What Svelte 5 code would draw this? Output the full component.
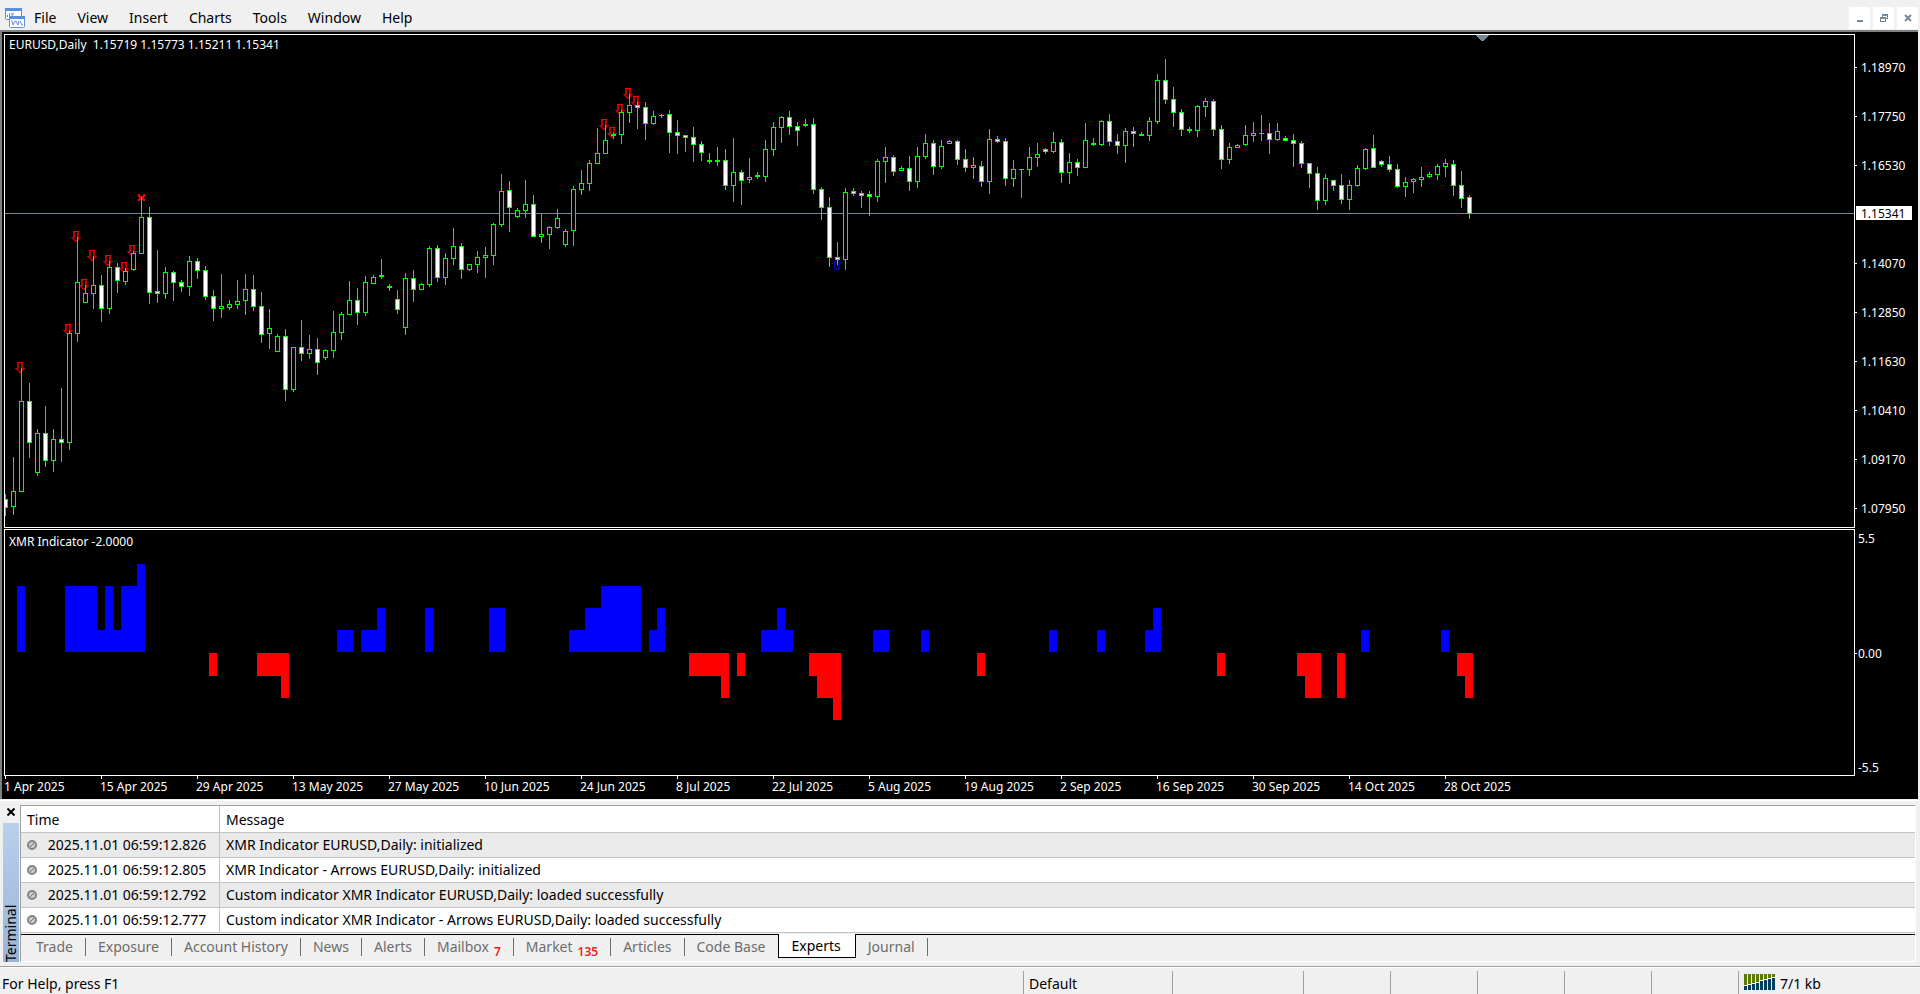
<script>
	const menu = ['File', 'View', 'Insert', 'Charts', 'Tools', 'Window', 'Help'];

	const STEP = 8;

	// high, open/close top, open/close bottom, low, 1 = bearish
	const candles = [
		[494, 499, 508, 516, 1], [457, 491, 507, 515, 0], [368, 401, 492, 492, 0], [383, 401, 443, 458, 1],
		[429, 433, 473, 476, 0], [406, 433, 461, 467, 1], [429, 439, 461, 472, 0], [388, 439, 443, 462, 1],
		[330, 333, 443, 450, 0], [237, 282, 334, 342, 0], [285, 293, 303, 303, 0], [256, 285, 294, 309, 0],
		[275, 285, 309, 322, 1], [261, 267, 309, 314, 0], [263, 267, 281, 293, 1], [268, 271, 282, 285, 0],
		[251, 253, 270, 271, 0], [197, 217, 254, 254, 0], [207, 217, 293, 304, 1], [250, 291, 294, 303, 1],
		[267, 272, 294, 299, 0], [271, 272, 283, 301, 1], [280, 282, 287, 292, 1], [256, 261, 287, 296, 0],
		[258, 261, 271, 279, 1], [266, 270, 297, 300, 1], [290, 296, 309, 321, 1], [274, 306, 309, 318, 0],
		[300, 304, 308, 310, 0], [280, 301, 305, 309, 0], [274, 289, 301, 315, 0], [275, 289, 307, 311, 1],
		[292, 306, 335, 343, 1], [309, 328, 334, 349, 0], [334, 336, 352, 352, 0], [329, 336, 390, 401, 1],
		[347, 347, 390, 392, 0], [320, 347, 354, 361, 1], [335, 349, 354, 359, 0], [338, 349, 363, 375, 1],
		[349, 350, 358, 360, 0], [311, 332, 351, 358, 0], [312, 314, 333, 340, 0], [281, 300, 315, 315, 0],
		[288, 300, 313, 325, 1], [276, 282, 313, 316, 0], [275, 277, 284, 284, 0], [259, 275, 277, 279, 0],
		[284, 286, 288, 291, 0], [290, 299, 310, 314, 1], [273, 278, 328, 335, 0], [270, 278, 290, 302, 1],
		[283, 284, 290, 290, 0], [246, 248, 285, 287, 0], [245, 248, 278, 282, 1], [253, 258, 278, 285, 0],
		[228, 246, 259, 265, 0], [243, 246, 270, 279, 1], [264, 264, 270, 271, 0], [251, 257, 265, 273, 0],
		[247, 255, 258, 278, 0], [223, 224, 256, 265, 0], [174, 191, 225, 227, 0], [181, 190, 208, 232, 1],
		[208, 210, 217, 218, 0], [180, 204, 211, 218, 0], [195, 204, 237, 237, 1], [214, 234, 237, 243, 0],
		[226, 227, 235, 249, 0], [209, 218, 228, 229, 0], [229, 231, 245, 247, 0], [186, 189, 231, 246, 0],
		[170, 183, 190, 195, 0], [160, 163, 184, 191, 0], [128, 153, 164, 164, 0], [125, 140, 154, 154, 0],
		[133, 134, 136, 139, 0], [110, 112, 135, 144, 0], [94, 105, 113, 123, 0], [102, 105, 108, 129, 1],
		[102, 107, 124, 140, 1], [111, 116, 124, 125, 0], [114, 115, 116, 118, 0], [110, 114, 133, 153, 1],
		[120, 132, 136, 154, 1], [135, 135, 138, 152, 1], [127, 137, 145, 162, 1], [141, 144, 153, 161, 1],
		[153, 160, 162, 164, 0], [147, 160, 162, 166, 0], [149, 160, 186, 190, 1], [138, 172, 186, 202, 0],
		[170, 172, 181, 205, 1], [158, 177, 180, 183, 0], [172, 175, 177, 179, 0], [140, 149, 177, 182, 0],
		[122, 127, 150, 156, 0], [116, 117, 128, 143, 0], [111, 117, 127, 135, 1], [122, 126, 131, 146, 1],
		[119, 124, 126, 127, 0], [118, 124, 190, 194, 1], [187, 189, 208, 220, 1], [197, 207, 258, 267, 1],
		[242, 257, 260, 265, 1], [188, 192, 260, 270, 0], [188, 191, 194, 196, 1], [191, 193, 196, 208, 1],
		[191, 194, 197, 216, 1], [159, 161, 197, 202, 0], [147, 157, 162, 183, 0], [155, 157, 172, 176, 1],
		[166, 168, 171, 171, 0], [156, 168, 182, 191, 1], [147, 156, 182, 188, 0], [134, 143, 157, 159, 0],
		[140, 143, 167, 175, 1], [140, 146, 167, 169, 0], [140, 141, 144, 144, 0], [140, 141, 160, 165, 1],
		[149, 159, 168, 172, 1], [157, 165, 168, 179, 0], [161, 166, 182, 187, 1], [129, 139, 182, 194, 0],
		[136, 139, 142, 143, 1], [138, 141, 179, 186, 1], [160, 169, 179, 187, 0], [169, 169, 170, 198, 0],
		[147, 157, 170, 176, 0], [143, 154, 158, 167, 0], [148, 149, 152, 154, 1], [132, 142, 152, 153, 0],
		[139, 142, 173, 183, 1], [153, 162, 173, 184, 0], [159, 162, 168, 176, 1], [123, 140, 168, 168, 0],
		[138, 143, 145, 146, 0], [120, 121, 145, 146, 0], [114, 121, 142, 146, 1], [134, 141, 146, 154, 1],
		[128, 131, 146, 163, 0], [127, 131, 134, 147, 1], [132, 134, 136, 136, 0], [117, 121, 136, 141, 0],
		[74, 80, 122, 124, 0], [59, 80, 100, 104, 1], [87, 99, 113, 127, 1], [109, 112, 130, 136, 1],
		[127, 129, 131, 133, 0], [105, 106, 131, 137, 0], [98, 101, 107, 117, 0], [99, 101, 130, 136, 1],
		[125, 129, 160, 169, 1], [143, 147, 160, 164, 0], [144, 145, 148, 148, 0], [125, 135, 145, 146, 0],
		[122, 133, 136, 142, 0], [115, 133, 134, 141, 0], [123, 133, 140, 154, 1], [123, 131, 140, 141, 0],
		[136, 138, 141, 141, 1], [134, 140, 144, 167, 1], [141, 143, 164, 168, 1], [163, 163, 174, 188, 1],
		[167, 173, 201, 210, 1], [174, 178, 201, 205, 0], [180, 180, 186, 191, 1], [174, 185, 200, 204, 1],
		[180, 185, 200, 210, 0], [165, 168, 186, 187, 0], [148, 149, 169, 170, 0], [135, 148, 168, 168, 1],
		[160, 161, 165, 167, 1], [156, 164, 170, 172, 1], [164, 169, 187, 188, 1], [177, 182, 187, 197, 0],
		[178, 179, 182, 193, 0], [167, 177, 180, 187, 0], [172, 174, 177, 178, 0], [164, 166, 175, 180, 0],
		[159, 163, 167, 177, 0], [160, 164, 186, 196, 1], [171, 185, 199, 208, 1], [195, 197, 214, 219, 1]
	];

	// bar index, top of the arrow
	const sellArrows = [
		[2, 362], [8, 324], [9, 231], [10, 279], [11, 250], [13, 255], [15, 262], [16, 245],
		[75, 119], [76, 127], [77, 104], [78, 88], [79, 96]
	];
	const buyArrows = [[104, 259]];

	// first bar, last bar, value
	const histogram = [
		[2, 2, 3], [8, 11, 3], [12, 12, 1], [13, 13, 3], [14, 14, 1], [15, 16, 3], [17, 17, 4],
		[26, 26, -1], [32, 34, -1], [35, 35, -2], [42, 43, 1], [45, 46, 1], [47, 47, 2],
		[53, 53, 2], [61, 62, 2], [71, 72, 1], [73, 74, 2], [75, 79, 3], [81, 81, 1],
		[82, 82, 2], [86, 89, -1], [90, 90, -2], [92, 92, -1], [95, 96, 1], [97, 97, 2],
		[98, 98, 1], [101, 101, -1], [102, 103, -2], [104, 104, -3], [109, 110, 1],
		[115, 115, 1], [122, 122, -1], [131, 131, 1], [137, 137, 1], [143, 143, 1],
		[144, 144, 2], [152, 152, -1], [162, 162, -1], [163, 164, -2], [167, 167, -2],
		[170, 170, 1], [180, 180, 1], [182, 182, -1], [183, 183, -2]
	];

	const prices = [
		['1.18970', 33], ['1.17750', 82], ['1.16530', 131], ['1.14070', 229], ['1.12850', 278],
		['1.11630', 327], ['1.10410', 376], ['1.09170', 425], ['1.07950', 474]
	];

	const dates = [
		'1 Apr 2025', '15 Apr 2025', '29 Apr 2025', '13 May 2025', '27 May 2025', '10 Jun 2025',
		'24 Jun 2025', '8 Jul 2025', '22 Jul 2025', '5 Aug 2025', '19 Aug 2025', '2 Sep 2025',
		'16 Sep 2025', '30 Sep 2025', '14 Oct 2025', '28 Oct 2025'
	];

	const log = [
		['2025.11.01 06:59:12.826', 'XMR Indicator EURUSD,Daily: initialized'],
		['2025.11.01 06:59:12.805', 'XMR Indicator - Arrows EURUSD,Daily: initialized'],
		['2025.11.01 06:59:12.792', 'Custom indicator XMR Indicator EURUSD,Daily: loaded successfully'],
		['2025.11.01 06:59:12.777', 'Custom indicator XMR Indicator - Arrows EURUSD,Daily: loaded successfully']
	];

	const tabs = [
		{ name: 'Trade' },
		{ name: 'Exposure' },
		{ name: 'Account History' },
		{ name: 'News' },
		{ name: 'Alerts' },
		{ name: 'Mailbox', count: 7 },
		{ name: 'Market', count: 135 },
		{ name: 'Articles' },
		{ name: 'Code Base' },
		{ name: 'Experts' },
		{ name: 'Journal' }
	];
	let active = $state('Experts');

	// top of the lower half of each connection bar
	const signal = [12, 11, 10, 9, 7, 6, 5, 4];
</script>

<div class="app">
	<header class="menubar">
		<svg class="logo" width="20" height="20" viewBox="0 0 20 20" aria-hidden="true">
			<rect x="0.5" y="0.5" width="16" height="11" rx="1" fill="#fff" stroke="#5b8fe0" />
			<rect x="0" y="0" width="17" height="3" fill="#5b8fe0" />
			<path d="M2.5 9V7M4.5 8V5M7 8V5M7 6h2" stroke="#5b8fe0" fill="none" />
			<rect x="4.5" y="8.5" width="15" height="11" rx="1" fill="#fff" stroke="#5b8fe0" />
			<rect x="4" y="8" width="16" height="3" fill="#5b8fe0" />
			<path d="M6 13h1l1 4 2-4h1l2 4 1-4M15 13l2 4h1" stroke="#5b8fe0" fill="none" />
		</svg>
		<nav>
			{#each menu as item (item)}
				<button>{item}</button>
			{/each}
		</nav>
		<div class="controls">
			<button aria-label="Minimize">
				<svg width="10" height="10"><path d="M2 7h6v2H2z" fill="#778899" /></svg>
			</button>
			<button aria-label="Restore">
				<svg width="10" height="10" fill="none" stroke="#778899" shape-rendering="crispEdges">
					<path d="M3.5 4V1.5h5v4H7M3 2.5h6" />
					<path d="M1.5 4.5h5v4h-5zM1 5.5h6" />
				</svg>
			</button>
			<button aria-label="Close">
				<svg width="10" height="10"><path d="M2 2l6 6M8 2l-6 6" stroke="#778899" stroke-width="2" /></svg>
			</button>
		</div>
	</header>

	<main class="chart">
		<svg class="pane upper" shape-rendering="crispEdges" role="img" aria-label="EURUSD daily candles">
			<g transform="translate(-5 -35)">
				<path d="M1475 35h15l-7 6h-1z" fill="#778899" />
				<rect x="5" y="213" width="100%" height="1" fill="#778899" />
				{#each sellArrows as [i, y] (i)}
					<g class="sell" transform="translate({i * STEP - 1} {y})">
						<path d="M2 0h2v7H2zM6 0h2v7H6z" />
						<path d="M0 6h3v2H1V7H0zM7 6h3v1H9v1H7zM2 8h2v1H2zM6 8h2v1H6zM3 9h4v1H3zM4 10h2v1H4z" />
						<path d="M2 0h6v1H2z" class="bright" />
					</g>
				{/each}
				{#each buyArrows as [i, y] (i)}
					<g class="buy" transform="translate({i * STEP} {y})">
						<path d="M2 4h2v7H2zM6 4h2v7H6zM2 10h6v1H2z" />
						<path d="M4 0h2v1H4zM3 1h4v1H3zM2 2h2v1H2zM6 2h2v1H6zM1 3h2v1H1zM7 3h2v1H7zM0 4h3v1H0zM7 4h3v1H7z" />
					</g>
				{/each}
				<path d="M138 194h2v2h3v-2h2v3h-1v2h1v2h-2v-1h-3v1h-2v-2h1v-2h-1z" fill="#f00" />
				{#each candles as [high, top, bottom, low, bearish], i (i)}
					<g transform="translate({5 + i * STEP} 0)">
						<rect y={high} width="1" height={low - high} class="line" />
						<rect x="-2" y={top} width="5" height={bottom - top} class="line" />
						{#if bottom - top > 2}
							<rect x="-1" y={top + 1} width="3" height={bottom - top - 2} class={bearish ? 'bear' : 'bull'} />
						{/if}
					</g>
				{/each}
			</g>
			<text x="4" y="14">EURUSD,Daily&nbsp; 1.15719 1.15773 1.15211 1.15341</text>
		</svg>

		<svg class="axis upper" shape-rendering="crispEdges">
			{#each prices as [price, y] (price)}
				<rect {y} width="2" height="1" fill="#fff" />
				<text x="6" y={y + 5}>{price}</text>
			{/each}
			<rect x="1" y="172" width="56" height="14" fill="#fff" />
			<text x="6" y="184" class="current">1.15341</text>
		</svg>

		<svg class="pane" shape-rendering="crispEdges" role="img" aria-label="XMR Indicator">
			{#each histogram as [from, to, value] (from)}
				{#if value > 0}
					<rect x={from * STEP - 4} y={122 - value * 22} width={(to - from + 1) * STEP} height={value * 22} fill="#00f" />
				{:else}
					<rect x={from * STEP - 4} y="123" width={(to - from + 1) * STEP} height={1 - value * 22} fill="#f00" />
				{/if}
			{/each}
			<text x="4" y="16">XMR Indicator -2.0000</text>
		</svg>

		<svg class="axis" shape-rendering="crispEdges">
			<text x="3" y="14">5.5</text>
			<rect y="124" width="2" height="1" fill="#fff" />
			<text x="3" y="129">0.00</text>
			<text x="3" y="243">-5.5</text>
		</svg>

		<svg class="dates" shape-rendering="crispEdges">
			{#each dates as date, i (date)}
				<rect x={1 + i * 96} width="1" height="3" fill="#fff" />
				<text x={i * 96} y="15">{date}</text>
			{/each}
		</svg>
	</main>

	<section class="terminal">
		<aside>
			<button class="close" aria-label="Close terminal">
				<svg width="8" height="8"><path d="M.5.5l7 7M7.5.5l-7 7" stroke="#000" stroke-width="2" /></svg>
			</button>
			<div class="caption"><span>Terminal</span></div>
		</aside>

		<div class="body">
			<table>
				<thead>
					<tr><th class="time">Time</th><th>Message</th></tr>
				</thead>
				<tbody>
					{#each log as [time, message] (time)}
						<tr>
							<td class="time">
								<svg width="10" height="10" aria-hidden="true">
									<circle cx="5" cy="5" r="4" fill="#ccc" stroke="#858585" stroke-width="2" />
									<path d="M3 7l4-4" stroke="#707070" stroke-width="1" />
								</svg>
								{time}
							</td>
							<td>{message}</td>
						</tr>
					{/each}
				</tbody>
			</table>

			<div class="tabs" role="tablist">
				{#each tabs as tab (tab.name)}
					<button
						role="tab"
						aria-selected={active === tab.name}
						class:active={active === tab.name}
						onclick={() => (active = tab.name)}
					>
						{tab.name}{#if tab.count}<span class="count">{tab.count}</span>{/if}
					</button>
				{/each}
			</div>
		</div>
	</section>

	<footer class="status">
		<span class="help">For Help, press F1</span>
		<span class="cell wide">Default</span>
		<span class="cell medium"></span>
		<span class="cell"></span>
		<span class="cell"></span>
		<span class="cell"></span>
		<span class="cell"></span>
		<span class="cell"></span>
		<span class="cell traffic">
			<svg width="31" height="16" shape-rendering="crispEdges" aria-hidden="true">
				{#each signal as y, i (i)}
					<rect x={i * 4} width="3" height="16" fill="#fff" />
					<rect x={i * 4} width="3" height={y - 1} fill="#5a7a00" />
					<rect x={i * 4} {y} width="3" height={16 - y} fill="#00405e" />
				{/each}
			</svg>
			7/1 kb
		</span>
	</footer>
</div>

<style>
	:global(body) {
		margin: 0;
		background: #f0f0f0;
	}

	.app {
		display: flex;
		flex-direction: column;
		min-height: 100vh;
		font-family: 'Noto Sans', sans-serif;
		font-size: 14px;
		line-height: 20px;
		color: #000;
		background: #f0f0f0;
	}

	button {
		padding: 0;
		border: 0;
		background: none;
		font: inherit;
		color: inherit;
	}

	.menubar {
		display: flex;
		align-items: center;
		height: 24px;
		padding: 6px 2px 0 5px;
	}

	.logo {
		margin-right: 9px;
	}

	nav {
		display: flex;
		flex: 1;
		gap: 21px;
	}

	.controls {
		display: flex;
		gap: 3px;
	}

	.controls button {
		display: grid;
		place-items: center;
		width: 21px;
		height: 22px;
		background: #fff;
	}

	.chart {
		display: grid;
		grid-template-columns: 1fr 63px;
		grid-template-rows: 495px 247px 23px;
		margin-right: 2px;
		padding: 2px 0 0 2px;
		border-top: 2px solid #808080;
		border-left: 2px solid #808080;
		background: #000;
	}

	.chart svg {
		display: block;
		width: 100%;
		height: 100%;
		box-sizing: border-box;
		overflow: hidden;
	}

	.chart .pane {
		border: 1px solid #fff;
	}

	.chart .upper {
		height: 494px;
	}

	.chart .dates {
		grid-column: 1 / -1;
	}

	.chart text {
		font-size: 12px;
		fill: #fff;
	}

	.chart .current {
		fill: #000;
	}

	.line {
		fill: #0f0;
	}

	.bear {
		fill: #fff;
	}

	.bull {
		fill: #000;
	}

	.sell {
		fill: #b80000;
	}

	.sell .bright {
		fill: #f00;
	}

	.buy {
		fill: #0000b8;
	}

	.terminal {
		display: flex;
		height: 157px;
		margin-top: 1px;
		padding: 4px 4px 4px 3px;
		border-top: 1px solid #fff;
		border-bottom: 1px solid #a0a0a0;
	}

	aside {
		display: flex;
		flex-direction: column;
		width: 16px;
		margin-right: 1px;
	}

	.close {
		display: grid;
		place-items: center;
		height: 14px;
		margin-bottom: 4px;
	}

	.caption {
		display: flex;
		flex: 1;
		justify-content: flex-end;
		background: linear-gradient(#b9d0ed, #9ab4d2);
	}

	.caption span {
		width: 16px;
		line-height: 16px;
		writing-mode: vertical-rl;
		transform: rotate(180deg);
	}

	.body {
		display: flex;
		flex: 1;
		flex-direction: column;
		min-width: 0;
		border: 1px solid #fff;
		border-top-color: #a0a0a0;
		border-left-color: #a0a0a0;
	}

	table {
		width: 100%;
		border-collapse: collapse;
		table-layout: fixed;
		background: #fff;
	}

	th,
	td {
		height: 24px;
		padding: 0 6px;
		border-bottom: 1px solid #c3c3c3;
		font-weight: 400;
		text-align: left;
		white-space: nowrap;
	}

	th {
		height: 24px;
		padding-top: 2px;
	}

	.time {
		width: 186px;
		border-right: 1px solid #c3c3c3;
	}

	td svg {
		margin-right: 7px;
	}

	tbody tr:nth-child(odd) {
		background: #eaeaea;
	}

	.tabs {
		display: flex;
		flex: 1;
		margin-top: 1px;
		padding-left: 3px;
		border-top: 1px solid #000;
	}

	.tabs button {
		position: relative;
		height: 24px;
		padding: 0 13px 0 12px;
		color: #6d6d6d;
	}

	.tabs button::after {
		content: '';
		position: absolute;
		top: 3px;
		right: 0;
		width: 1px;
		height: 18px;
		background: #6d6d6d;
	}

	.tabs .active {
		margin: -1px 0 0 -1px;
		padding: 0 14px 0 13px;
		border: 1px solid #000;
		border-top: 0;
		background: #fff;
		color: #000;
	}

	.tabs .active::after {
		display: none;
	}

	.count {
		position: relative;
		top: 4px;
		margin-left: 5px;
		font-size: 12px;
		font-weight: 600;
		color: #f02020;
	}

	.status {
		display: flex;
		flex: 1;
		align-items: stretch;
		min-height: 23px;
		padding-top: 3px;
		border-top: 1px solid #fff;
	}

	.help {
		flex: 1;
		padding: 3px 2px;
	}

	.cell {
		width: 76px;
		padding: 3px 5px;
		border-left: 1px solid #a0a0a0;
	}

	.wide {
		width: 138px;
	}

	.medium {
		width: 120px;
	}

	.traffic {
		display: flex;
		gap: 5px;
		width: 171px;
	}
</style>
